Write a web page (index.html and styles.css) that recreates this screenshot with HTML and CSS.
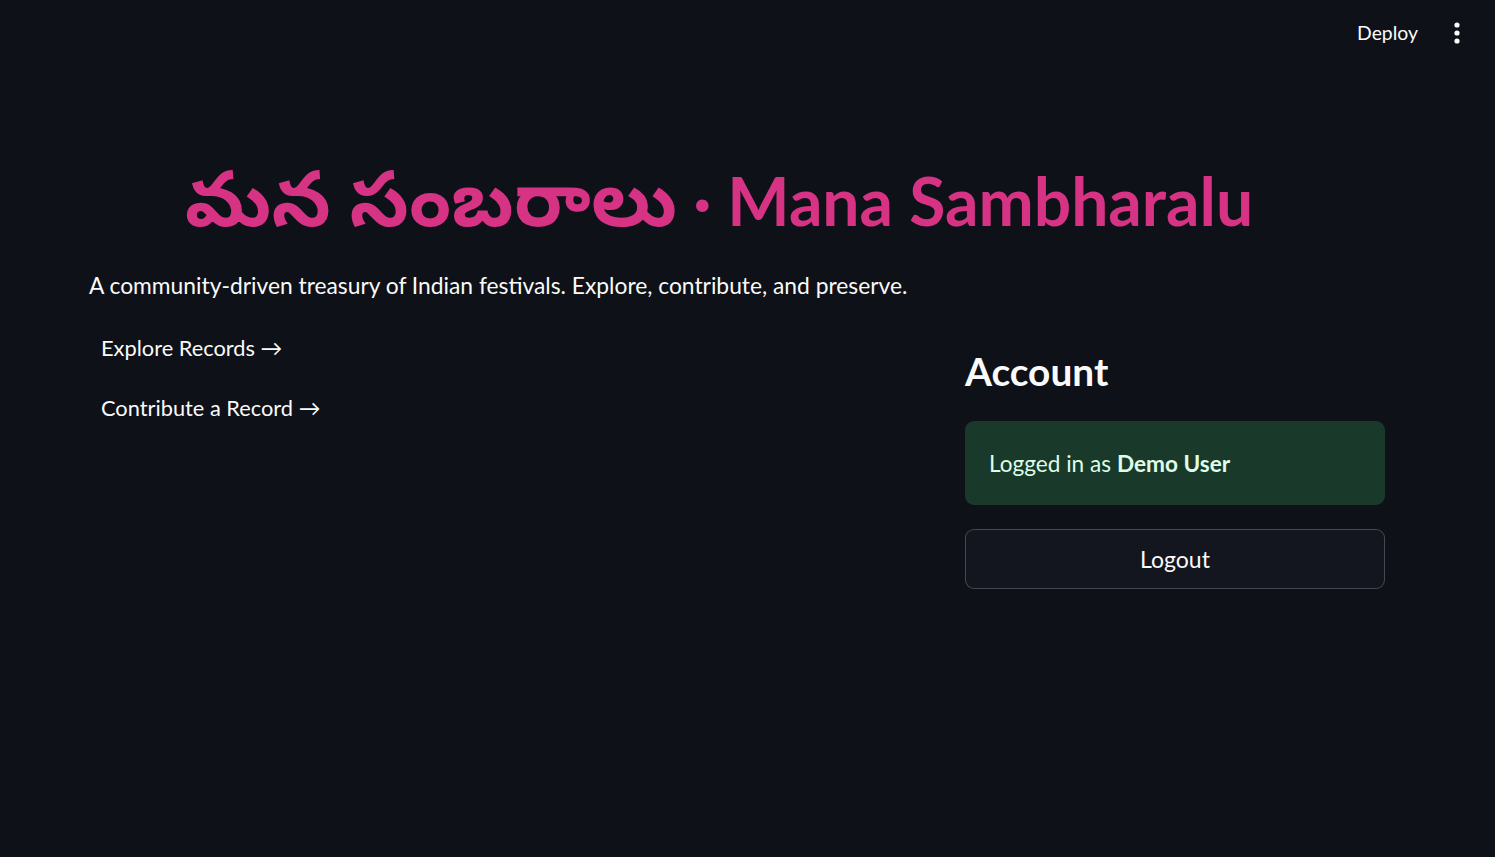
FILE: index.html
```html
<!DOCTYPE html>
<html lang="en">
<head>
<meta charset="utf-8">
<title>Mana Sambharalu</title>
<link rel="stylesheet" href="styles.css">
</head>
<body>
<header class="topbar">
  <span class="deploy">Deploy</span>
  <span class="menu">
    <svg width="8" height="22" viewBox="0 0 8 22"><circle cx="4" cy="3" r="2.6" fill="#fafafa"/><circle cx="4" cy="11" r="2.6" fill="#fafafa"/><circle cx="4" cy="19" r="2.6" fill="#fafafa"/></svg>
  </span>
</header>
<main class="main">
  <h1 class="title"><span class="telugu">మన సంబరాలు</span> · Mana Sambharalu</h1>
  <p class="subtitle">A community-driven treasury of Indian festivals. Explore, contribute, and preserve.</p>
  <div class="cols">
    <div class="col-left">
      <a class="page-link">Explore Records →</a>
      <a class="page-link">Contribute a Record →</a>
    </div>
    <div class="col-right">
      <h3 class="account">Account</h3>
      <div class="success">Logged in as <strong>Demo User</strong></div>
      <button class="logout">Logout</button>
    </div>
  </div>
</main>
</body>
</html>
```
FILE: styles.css
```css
html, body {
  margin: 0;
  padding: 0;
  background: #0e1117;
  color: #fafafa;
  font-family: Lato, "Noto Sans Telugu", "Noto Sans", sans-serif;
  width: 1495px;
  height: 857px;
  overflow: hidden;
}
.topbar {
  height: 66px;
  display: flex;
  justify-content: flex-end;
  align-items: center;
  padding-right: 34px;
  gap: 35px;
}
.deploy {
  font-size: 19.4px;
  margin-top: -2px;
}
.menu {
  display: flex;
  align-items: center;
}
.main {
  padding: 0 110px 0 89px;
}
.title {
  margin: 92px 0 0 0;
  text-align: center;
  padding-right: 36px;
  font-size: 66px;
  font-weight: 700;
  color: #d63384;
  line-height: 76px;
  white-space: nowrap;
}
.telugu {
  font-size: 77px;
}
.subtitle {
  margin: 31px 0 0 0;
  font-size: 22.8px;
  line-height: 30px;
}
.cols {
  display: flex;
  gap: 36px;
  margin-top: 26px;
}
.col-left {
  flex: 1;
  display: flex;
  flex-direction: column;
  gap: 24px;
  padding-top: 4px;
}
.page-link {
  padding-left: 12px;
  font-size: 21.8px;
  line-height: 36px;
  color: #fafafa;
}
.col-right {
  width: 420px;
  display: flex;
  flex-direction: column;
}
.account {
  margin: 20px 0 0 0;
  font-size: 38.8px;
  font-weight: 700;
  line-height: 50px;
}
.success {
  margin-top: 25px;
  height: 84px;
  box-sizing: border-box;
  display: flex;
  align-items: center;
  padding-left: 24px;
  background: #193a2a;
  border-radius: 9px;
  color: #dffde9;
  font-size: 22.6px;
}
.success strong {
  margin-left: 6px;
  font-weight: 700;
}
.logout {
  margin-top: 24px;
  height: 60px;
  background: #13161e;
  border: 1px solid rgba(250, 250, 250, 0.22);
  border-radius: 9px;
  color: #fafafa;
  font-family: inherit;
  font-size: 23px;
}
```
